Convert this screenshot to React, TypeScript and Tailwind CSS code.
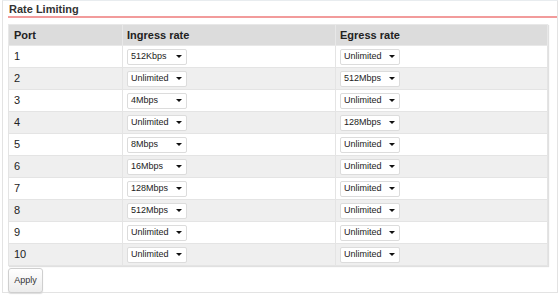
const ingress = ["512Kbps", "Unlimited", "4Mbps", "Unlimited", "8Mbps", "16Mbps", "128Mbps", "512Mbps", "Unlimited", "Unlimited"];
const egress = ["Unlimited", "512Mbps", "Unlimited", "128Mbps", "Unlimited", "Unlimited", "Unlimited", "Unlimited", "Unlimited", "Unlimited"];

function RateSelect({ value }: { value: string }) {
  return (
    <div className="flex h-[16px] w-[60px] items-center justify-between rounded-[2px] border border-[#dcdcdc] bg-white pl-[3px] pr-[4px] text-[9px] text-[#222]">
      <span>{value}</span>
      <span className="h-0 w-0 border-x-[3px] border-t-[3px] border-x-transparent border-t-[#111]" />
    </div>
  );
}

export default function App() {
  return (
    <div className="h-[295px] w-[560px] bg-white font-['Liberation_Sans',Arial,sans-serif] text-[#222]">
      <div className="mx-[2px] h-[293px] border border-[#e3e3e3] border-t-[#e8ecef] pt-[2px]">
        <div className="pl-[6px] text-[11px] font-bold leading-[12px] text-[#333]">Rate Limiting</div>
        <div className="ml-[5px] mt-[1px] h-[2px] bg-[#f29b9b]" />
        <div className="pl-[5px] pt-[6px]">
          <table className="w-[540px] border-collapse border border-[#d2d2d2] text-[11px] shadow-[1px_1px_1px_#e0e0e0]">
            <thead>
              <tr className="h-[21px] bg-[#dcdcdc] text-left text-[11px] font-bold">
                <th className="w-[114px] border border-[#e8e8e8] pl-[5px] font-bold">Port</th>
                <th className="w-[213px] border border-[#e8e8e8] pl-[4px] font-bold">Ingress rate</th>
                <th className="border border-[#e8e8e8] pl-[4px] font-bold">Egress rate</th>
              </tr>
            </thead>
            <tbody>
              {ingress.map((v, i) => (
                <tr key={i} className={`h-[22px] ${i % 2 === 1 ? "bg-[#efefef]" : "bg-white"}`}>
                  <td className="border border-[#e4e4e4] pl-[5px]">{i + 1}</td>
                  <td className="border border-[#e4e4e4] pl-[4px]">
                    <RateSelect value={v} />
                  </td>
                  <td className="border border-[#e4e4e4] pl-[4px]">
                    <RateSelect value={egress[i]} />
                  </td>
                </tr>
              ))}
            </tbody>
          </table>
          <button className="mt-[1px] h-[25px] w-[35px] rounded-[3px] border border-[#cfcfcf] bg-gradient-to-b from-white to-[#ececec] text-[9px] text-[#333] shadow-[0_1px_1px_#ddd]">
            Apply
          </button>
        </div>
      </div>
    </div>
  );
}
